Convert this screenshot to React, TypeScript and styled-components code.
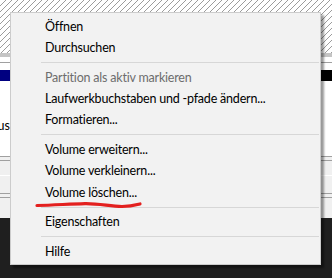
import React from "react";
import styled, { createGlobalStyle } from "styled-components";

const Global = createGlobalStyle`
  html, body { margin: 0; padding: 0; }
  body { width: 332px; height: 278px; overflow: hidden; background: #ffffff; }
`;

const Screen = styled.div`
  position: relative;
  width: 332px;
  height: 278px;
  overflow: hidden;
  display: flex;
  flex-direction: column;
  font-family: Lato, "Noto Sans", sans-serif;
`;

const Hatch = styled.div`
  height: 53px;
  flex: none;
  background-color: #ffffff;
  background-image: linear-gradient(135deg, transparent 0 43%, #9c9c9c 43% 57%, transparent 57% 100%);
  background-size: 6px 6px;
`;

const Strip = styled.div<{ $h: number; $bg: string }>`
  height: ${(p) => p.$h}px;
  flex: none;
  background: ${(p) => p.$bg};
`;

const HeaderRow = styled.div`
  height: 11px;
  flex: none;
  display: flex;
`;

const HeaderCell = styled.div<{ $bg: string }>`
  flex: 1;
  background: ${(p) => p.$bg};
`;

const InfoRow = styled.div`
  height: 75px;
  flex: none;
  display: flex;
  align-items: flex-start;
  background: #ffffff;
`;

const InfoText = styled.div`
  width: 10px;
  overflow: hidden;
  display: flex;
  justify-content: flex-end;
  white-space: nowrap;
  margin-top: 37px;
  font-size: 12.5px;
  color: #000;
`;

const Lower = styled.div`
  height: 62px;
  flex: none;
  display: flex;
  flex-direction: column;
  background: #f0f0f0;
`;

const Line = styled.div<{ $c: string; $mt: number }>`
  height: 1px;
  flex: none;
  margin-top: ${(p) => p.$mt}px;
  background: ${(p) => p.$c};
`;

const Dark = styled.div`
  flex: 1;
  background: #1f1f1f;
`;

const Menu = styled.div`
  position: absolute;
  left: 10px;
  top: 12px;
  width: 311px;
  box-sizing: border-box;
  background: #f2f2f2;
  border: 1px solid #cccccc;
  padding: 2.6px 0 2px;
  box-shadow: 3px 3px 2px rgba(0, 0, 0, 0.4);
  display: flex;
  flex-direction: column;
`;

const Item = styled.div<{ $disabled?: boolean }>`
  height: 21.33px;
  line-height: 21.33px;
  padding-left: 34px;
  font-size: 12.5px;
  letter-spacing: -0.2px;
  white-space: nowrap;
  color: ${(p) => (p.$disabled ? "#6d6d6d" : "#000000")};
`;

const Sep = styled.div`
  height: 8.33px;
  display: flex;
  align-items: center;
  padding: 0 1px 0 30px;
  &::before {
    content: "";
    flex: 1;
    height: 1px;
    background: #d7d7d7;
  }
`;

const Mark = styled.svg`
  position: absolute;
  left: 0;
  top: 0;
  pointer-events: none;
`;

export default function App() {
  return (
    <>
      <Global />
      <Screen>
        <Hatch />
        <Strip $h={4} $bg="#c4c4c4" />
        <Strip $h={5} $bg="#ffffff" />
        <Strip $h={1} $bg="#a0a0a0" />
        <Strip $h={7} $bg="#ffffff" />
        <HeaderRow>
          <HeaderCell $bg="#000080" />
          <HeaderCell $bg="#000000" />
        </HeaderRow>
        <InfoRow>
          <InfoText>Status</InfoText>
        </InfoRow>
        <Lower>
          <Line $c="#a0a0a0" $mt={0} />
          <Line $c="#a0a0a0" $mt={3} />
          <Line $c="#ffffff" $mt={14} />
          <Line $c="#a0a0a0" $mt={17} />
          <Line $c="#a0a0a0" $mt={3} />
        </Lower>
        <Dark />

        <Menu>
          <Item>Öffnen</Item>
          <Item>Durchsuchen</Item>
          <Sep />
          <Item $disabled>Partition als aktiv markieren</Item>
          <Item>Laufwerkbuchstaben und -pfade ändern...</Item>
          <Item>Formatieren...</Item>
          <Sep />
          <Item>Volume erweitern...</Item>
          <Item>Volume verkleinern...</Item>
          <Item>Volume löschen...</Item>
          <Sep />
          <Item>Eigenschaften</Item>
          <Sep />
          <Item>Hilfe</Item>
        </Menu>

        <Mark width="332" height="278" viewBox="0 0 332 278">
          <path
            d="M37 205.5 C55 205 70 204 85 203.6 C100 203.4 110 206.5 122 206.5 C130 206.5 136 205 140 204"
            fill="none"
            stroke="#e3201f"
            strokeWidth="3.2"
            strokeLinecap="round"
          />
        </Mark>
      </Screen>
    </>
  );
}
